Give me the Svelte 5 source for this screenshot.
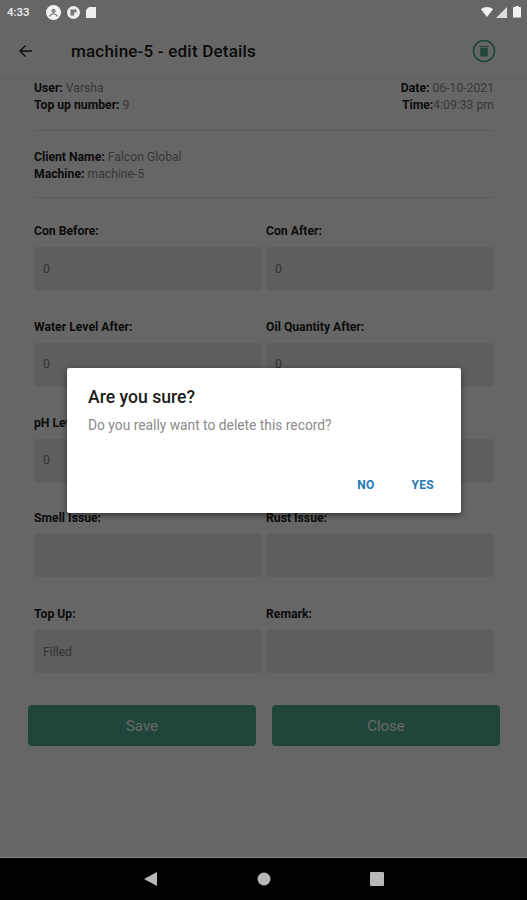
<script>
    const rows = [
        [{ label: "Con Before:", value: "0" }, { label: "Con After:", value: "0" }],
        [{ label: "Water Level After:", value: "0" }, { label: "Oil Quantity After:", value: "0" }],
        [{ label: "pH Level After:", value: "0" }, { label: "Coolant Top Up:", value: "" }],
        [{ label: "Smell Issue:", value: "" }, { label: "Rust Issue:", value: "" }],
        [{ label: "Top Up:", value: "Filled" }, { label: "Remark:", value: "" }],
    ];
</script>

<div class="screen">
    <div class="status-bar">
        <span class="clock">4:33</span>
        <svg class="notif" width="15" height="15" viewBox="0 0 15 15">
            <circle cx="7.5" cy="7.5" r="7.5" fill="#f2f2f2" />
            <circle cx="7.5" cy="6" r="2.2" fill="#8a8a8a" />
            <path d="M3.5 11.5c1-2 2.4-2.6 4-2.6s3 .6 4 2.6" fill="none" stroke="#8a8a8a" stroke-width="1.4" />
        </svg>
        <svg class="notif" width="13" height="13" viewBox="0 0 13 13">
            <circle cx="6.5" cy="6.5" r="6.5" fill="#eee" />
            <path d="M3.5 3.5h6v3H7v3H3.500z" fill="#777" />
        </svg>
        <svg class="notif" width="10" height="11" viewBox="0 0 10 11">
            <path d="M3 0h7v11H0V3z" fill="#eee" />
        </svg>
        <div class="status-right">
            <svg width="12" height="10" viewBox="0 0 12 10">
                <path d="M0 2.200C3.500-.7 8.500-.7 12 2.200L6 10z" fill="#f2f2f2" />
            </svg>
            <svg width="11" height="11" viewBox="0 0 11 11">
                <path d="M11 0v11H0z" fill="#ddd" />
            </svg>
            <svg class="battery" width="8" height="12" viewBox="0 0 8 12">
                <path d="M2.500 0h3v1H7a1 1 0 0 1 1 1v9.500H0V2a1 1 0 0 1 1-1h1.500z" fill="#f2f2f2" />
            </svg>
        </div>
    </div>

    <header class="toolbar">
        <svg class="back" width="14" height="14" viewBox="0 0 14 14">
            <path d="M14 7H2M7.500 1.500 2 7l5.500 5.500" fill="none" stroke="#222" stroke-width="1.400" />
        </svg>
        <h1>machine-5 - edit Details</h1>
        <svg class="trash" width="24" height="24" viewBox="0 0 24 24">
            <circle cx="12" cy="12" r="10.500" fill="none" stroke="#50af96" stroke-width="1.600" />
            <path d="M7.500 7h9v1.200h-9z" fill="#50af96" />
            <path d="M8.200 9h7.600v7.300a1.200 1.200 0 0 1-1.200 1.200H9.400a1.200 1.200 0 0 1-1.200-1.200z" fill="#50af96" />
        </svg>
    </header>

    <main class="content">
        <section class="meta split">
            <div>
                <p><b>User:</b> Varsha</p>
                <p><b>Top up number:</b> 9</p>
            </div>
            <div class="right">
                <p><b>Date:</b> 06-10-2021</p>
                <p><b>Time:</b>4:09:33 pm</p>
            </div>
        </section>
        <section class="meta client">
            <p><b>Client Name:</b> Falcon Global</p>
            <p><b>Machine:</b> machine-5</p>
        </section>

        <div class="fields">
            {#each rows as row}
                {#each row as field}
                    <div class="field">
                        <span class="label">{field.label}</span>
                        <div class="input">{field.value}</div>
                    </div>
                {/each}
            {/each}
        </div>

        <div class="actions">
            <button>Save</button>
            <button>Close</button>
        </div>
    </main>

    <nav class="nav-bar">
        <svg width="14" height="14" viewBox="0 0 14 14"><path d="M13 0v14L0 7z" fill="#b8b8b8" /></svg>
        <svg width="14" height="14" viewBox="0 0 14 14"><circle cx="7" cy="7" r="6.500" fill="#b8b8b8" /></svg>
        <svg width="14" height="14" viewBox="0 0 14 14"><rect width="14" height="14" rx="1" fill="#b8b8b8" /></svg>
    </nav>

    <div class="scrim"></div>

    <div class="dialog">
        <h2>Are you sure?</h2>
        <p>Do you really want to delete this record?</p>
        <div class="dialog-actions">
            <button>NO</button>
            <button>YES</button>
        </div>
    </div>
</div>

<style>
    :global(body) {
        margin: 0;
    }
    .screen {
        position: relative;
        width: 527px;
        height: 900px;
        display: flex;
        flex-direction: column;
        overflow: hidden;
        background: #ffffff;
        font-family: Roboto, "Liberation Sans", sans-serif;
    }
    .status-bar {
        height: 24px;
        display: flex;
        align-items: center;
        gap: 6px;
        padding: 0 6px 0 7px;
        color: #eee;
        position: relative;
        z-index: 2;
    }
    .clock {
        width: 33px;
        font-size: 11.500px;
        font-weight: 500;
    }
    .status-right {
        margin-left: auto;
        display: flex;
        align-items: center;
        gap: 3px;
    }
    .battery {
        margin-left: 3px;
    }
    .toolbar {
        height: 55px;
        display: flex;
        align-items: center;
        padding: 0 31px 0 18px;
        border-bottom: 1px solid #f0f0f0;
        box-sizing: border-box;
    }
    .toolbar h1 {
        margin: 0 0 0 39px;
        flex: 1;
        font-size: 17px;
        font-weight: 500;
        color: #1c1c1c;
        letter-spacing: 0.2px;
    }
    .content {
        flex: 1;
        padding: 0 33px 0 34px;
    }
    .meta {
        font-size: 12.200px;
        color: #8c8c8c;
        border-bottom: 1px solid #e6e6e6;
        line-height: 17px;
    }
    .meta p {
        margin: 0;
    }
    .meta b {
        color: #222;
        font-weight: 700;
    }
    .split {
        display: flex;
        justify-content: space-between;
        padding-top: 1px;
        height: 50px;
    }
    .right {
        text-align: right;
    }
    .client {
        padding-top: 18px;
        height: 48px;
    }
    .fields {
        display: grid;
        grid-template-columns: 228px 228px;
        column-gap: 4px;
        row-gap: 10.750px;
        padding-top: 24px;
    }
    .field {
        display: flex;
        flex-direction: column;
    }
    .label {
        height: 25px;
        box-sizing: border-box;
        padding-top: 1px;
        font-size: 12.200px;
        font-weight: 700;
        color: #222;
        line-height: 17px;
    }
    .input {
        height: 43px;
        margin-bottom: 17px;
        box-sizing: border-box;
        padding-left: 9px;
        display: flex;
        align-items: center;
        background: #ebebeb;
        border-radius: 3px;
        font-size: 12.200px;
        color: #808080;
    }
    .actions {
        display: flex;
        gap: 16px;
        margin: 15px -6px 0 -6px;
    }
    .actions button {
        width: 228px;
        height: 41px;
        border: none;
        border-radius: 4px;
        background: #50af96;
        color: #ffffff;
        font-family: inherit;
        font-size: 15px;
    }
    .nav-bar {
        position: absolute;
        left: 0;
        right: 0;
        bottom: 0;
        height: 42px;
        z-index: 2;
        background: #000;
        box-shadow: 0 -1px 0 #8a8a8a;
        display: flex;
        align-items: center;
        justify-content: center;
        gap: 99px;
    }
    .scrim {
        position: absolute;
        inset: 0;
        background: rgba(0, 0, 0, 0.6);
        z-index: 1;
    }
    .dialog {
        position: absolute;
        z-index: 3;
        left: 67px;
        top: 368px;
        width: 394px;
        height: 145px;
        box-sizing: border-box;
        padding: 19px 21px 0;
        background: #fff;
        border-radius: 2px;
        box-shadow: 0 2px 6px rgba(0, 0, 0, 0.5);
    }
    .dialog h2 {
        margin: 0;
        font-size: 17.600px;
        font-weight: 500;
        color: #1c1c1c;
    }
    .dialog p {
        margin: 10px 0 0;
        font-size: 13.800px;
        color: #8a8a8a;
    }
    .dialog-actions {
        position: absolute;
        right: 27px;
        bottom: 21px;
        display: flex;
        gap: 37px;
    }
    .dialog-actions button {
        padding: 0;
        border: none;
        background: none;
        font-family: inherit;
        font-size: 12px;
        font-weight: 700;
        color: #1f78b4;
        letter-spacing: 0.3px;
    }
</style>
